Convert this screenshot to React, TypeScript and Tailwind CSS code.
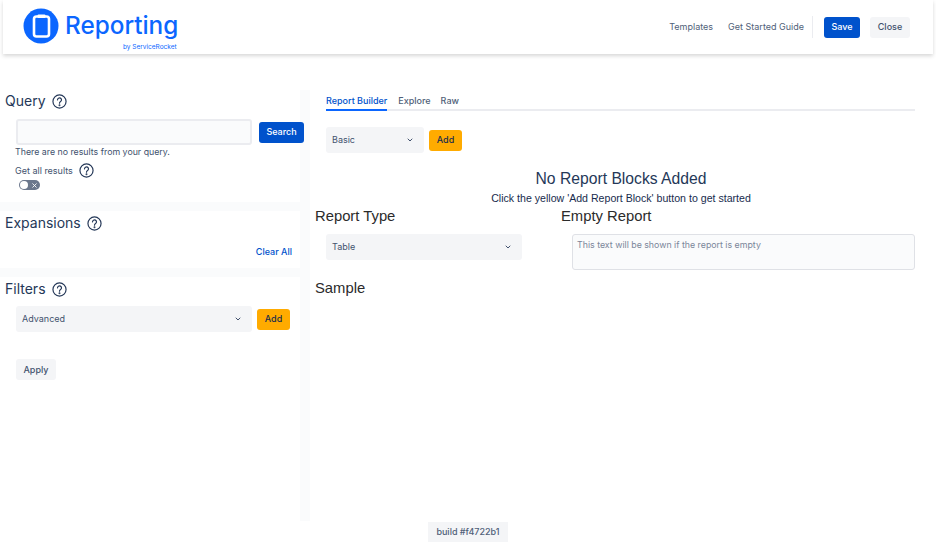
import { ChevronDown, X } from "lucide-react";

function HelpIcon() {
  return (
    <svg width="15" height="15" viewBox="0 0 24 24" fill="none" stroke="#253858" strokeWidth="1.9" strokeLinecap="round">
      <circle cx="12" cy="12" r="10.5" />
      <path d="M8.8 9.4a3.2 3.2 0 1 1 4.9 2.7c-1.1.7-1.7 1.3-1.7 2.5" />
      <circle cx="12" cy="18" r="0.6" fill="#253858" />
    </svg>
  );
}

function Logo() {
  return (
    <svg width="36" height="36" viewBox="0 0 36 36">
      <circle cx="18" cy="18" r="17.5" fill="#0b66ff" />
      <rect x="11" y="8.5" width="15" height="20" rx="2.5" fill="none" stroke="#fff" strokeWidth="2.6" />
      <rect x="14.5" y="6.5" width="8" height="3.5" rx="1" fill="#fff" />
    </svg>
  );
}

function Select({ label, className }: { label: string; className: string }) {
  return (
    <div className={`flex h-[26px] shrink-0 items-center justify-between rounded-[3px] bg-[#f4f5f7] pl-[6px] pr-[10px] text-[9px] text-[#42526e] ${className}`}>
      <span>{label}</span>
      <ChevronDown size={8} strokeWidth={3} />
    </div>
  );
}

function AddButton({ className = "" }: { className?: string }) {
  return (
    <button className={`flex h-[21px] w-[33px] items-center justify-center rounded-[3px] bg-[#ffab00] text-[9px] font-medium text-[#172b4d] ${className}`}>
      Add
    </button>
  );
}

function SectionTitle({ title }: { title: string }) {
  return (
    <div className="flex items-center gap-[6px]">
      <h2 className="text-[14px] leading-[20px] text-[#253858]">{title}</h2>
      <HelpIcon />
    </div>
  );
}

export default function App() {
  return (
    <div className="relative h-[542px] w-[936px] overflow-hidden bg-white font-['Inter',sans-serif]">
      <header className="mx-[3px] flex h-[54px] items-center justify-between pl-[20px] pr-[23px] shadow-[0_2px_4px_rgba(0,0,0,0.16)]">
        <div className="relative -mt-[3px] flex items-center gap-[6px]">
          <Logo />
          <span className="text-[24.3px] font-medium leading-none text-[#0b66ff]">Reporting</span>
          <span className="absolute left-[100px] top-[36px] text-[6.5px] leading-none text-[#0b66ff]">by ServiceRocket</span>
        </div>
        <div className="flex items-center text-[9px] text-[#505f79]">
          <span>Templates</span>
          <span className="ml-[15px]">Get Started Guide</span>
          <span className="ml-[8px] h-[22px] w-px bg-[#ebecf0]" />
          <button className="ml-[11px] flex h-[21px] w-[36px] items-center justify-center rounded-[3px] bg-[#0052cc] font-medium text-white">Save</button>
          <button className="ml-[10px] flex h-[21px] w-[40px] items-center justify-center rounded-[3px] bg-[#f4f5f7] font-medium text-[#42526e]">Close</button>
        </div>
      </header>

      <main className="mt-[36px] flex h-[431px] items-stretch">
        <aside className="flex w-[300px] shrink-0 flex-col">
          <section className="h-[112px] pl-[5px] pt-[1px]">
            <SectionTitle title="Query" />
            <div className="mt-[8px] flex items-center pl-[11px]">
              <div className="h-[26px] w-[236px] shrink-0 rounded-[3px] border-2 border-[#ebecf0] bg-[#fafbfc]" />
              <button className="relative ml-[7px] flex h-[21px] w-[45px] shrink-0 items-center justify-center rounded-[3px] bg-[#0052cc] text-[9px] font-medium text-white">Search</button>
            </div>
            <p className="pl-[10px] pt-[1px] text-[8.8px] leading-[12px] text-[#42526e]">There are no results from your query.</p>
            <div className="mt-[5px] flex items-center gap-[6px] pl-[10px]">
              <span className="text-[9px] text-[#42526e]">Get all results</span>
              <HelpIcon />
            </div>
            <div className="ml-[14px] mt-[2px] flex h-[10px] w-[21px] items-center justify-between rounded-full bg-[#6b778c] px-[1px]">
              <span className="h-[8px] w-[8px] rounded-full bg-white" />
              <X size={7} strokeWidth={3} color="#fff" className="mr-[1px]" />
            </div>
          </section>

          <section className="h-[66px] border-t-[9px] border-[#fafbfc] pl-[5px] pt-[2px]">
            <SectionTitle title="Expansions" />
            <div className="mt-[12px] pr-[8px] text-right text-[9px] font-medium text-[#0052cc]">Clear All</div>
          </section>

          <section className="flex-1 border-t-[9px] border-[#fafbfc] pl-[5px] pt-[2px]">
            <SectionTitle title="Filters" />
            <div className="mt-[7px] flex items-center pl-[11px]">
              <Select label="Advanced" className="w-[236px]" />
              <AddButton className="ml-[5px]" />
            </div>
            <button className="ml-[11px] mt-[27px] flex h-[21px] w-[40px] items-center justify-center rounded-[3px] bg-[#f4f5f7] text-[9px] font-medium text-[#42526e]">Apply</button>
          </section>
        </aside>

        <div className="w-[10px] shrink-0 bg-[#fafbfc]" />

        <div className="flex-1 pl-[5px] font-['Liberation_Sans',sans-serif]">
          <nav className="ml-[11px] mr-[21px] flex h-[21px] gap-[11px] border-b-2 border-[#ebecf0] pt-[4px] font-['Inter',sans-serif] text-[9px] font-medium text-[#505f79]">
            <span className="-mb-[2px] border-b-2 border-[#0b66ff] text-[#0052cc]">Report Builder</span>
            <span>Explore</span>
            <span className="-ml-[1px]">Raw</span>
          </nav>
          <div className="ml-[11px] mt-[16px] flex items-center font-['Inter',sans-serif]">
            <Select label="Basic" className="w-[98px]" />
            <AddButton className="ml-[5px]" />
          </div>
          <div className="mt-[16px] pr-[9px] text-center">
            <h2 className="text-[15.7px] leading-[19px] text-[#253858]">No Report Blocks Added</h2>
            <p className="mt-[3px] text-[10.6px] leading-[14px] text-[#172b4d]">Click the yellow 'Add Report Block' button to get started</p>
          </div>
          <div className="mt-[2px] flex">
            <div className="w-[246px]">
              <h3 className="text-[14.8px] leading-[19px] text-[#2b2b2b]">Report Type</h3>
              <Select label="Table" className="ml-[11px] mt-[8px] w-[196px] font-['Inter',sans-serif]" />
            </div>
            <div className="flex-1">
              <h3 className="text-[14.8px] leading-[19px] text-[#2b2b2b]">Empty Report</h3>
              <div className="ml-[11px] mr-[21px] mt-[8px] h-[36px] rounded-[3px] border border-[#dfe1e6] bg-[#fafbfc] px-[4px] py-[4px] font-['Inter',sans-serif] text-[8.8px] leading-[12px] text-[#7a869a]">
                This text will be shown if the report is empty
              </div>
            </div>
          </div>
          <h3 className="mt-[9px] text-[14.8px] leading-[19px] text-[#2b2b2b]">Sample</h3>
        </div>
      </main>

      <div className="absolute left-[428px] top-[522px] flex h-[20px] w-[80px] items-center justify-center bg-[#f4f5f7] text-[9px] font-medium text-[#505f79]">
        build #f4722b1
      </div>
    </div>
  );
}
